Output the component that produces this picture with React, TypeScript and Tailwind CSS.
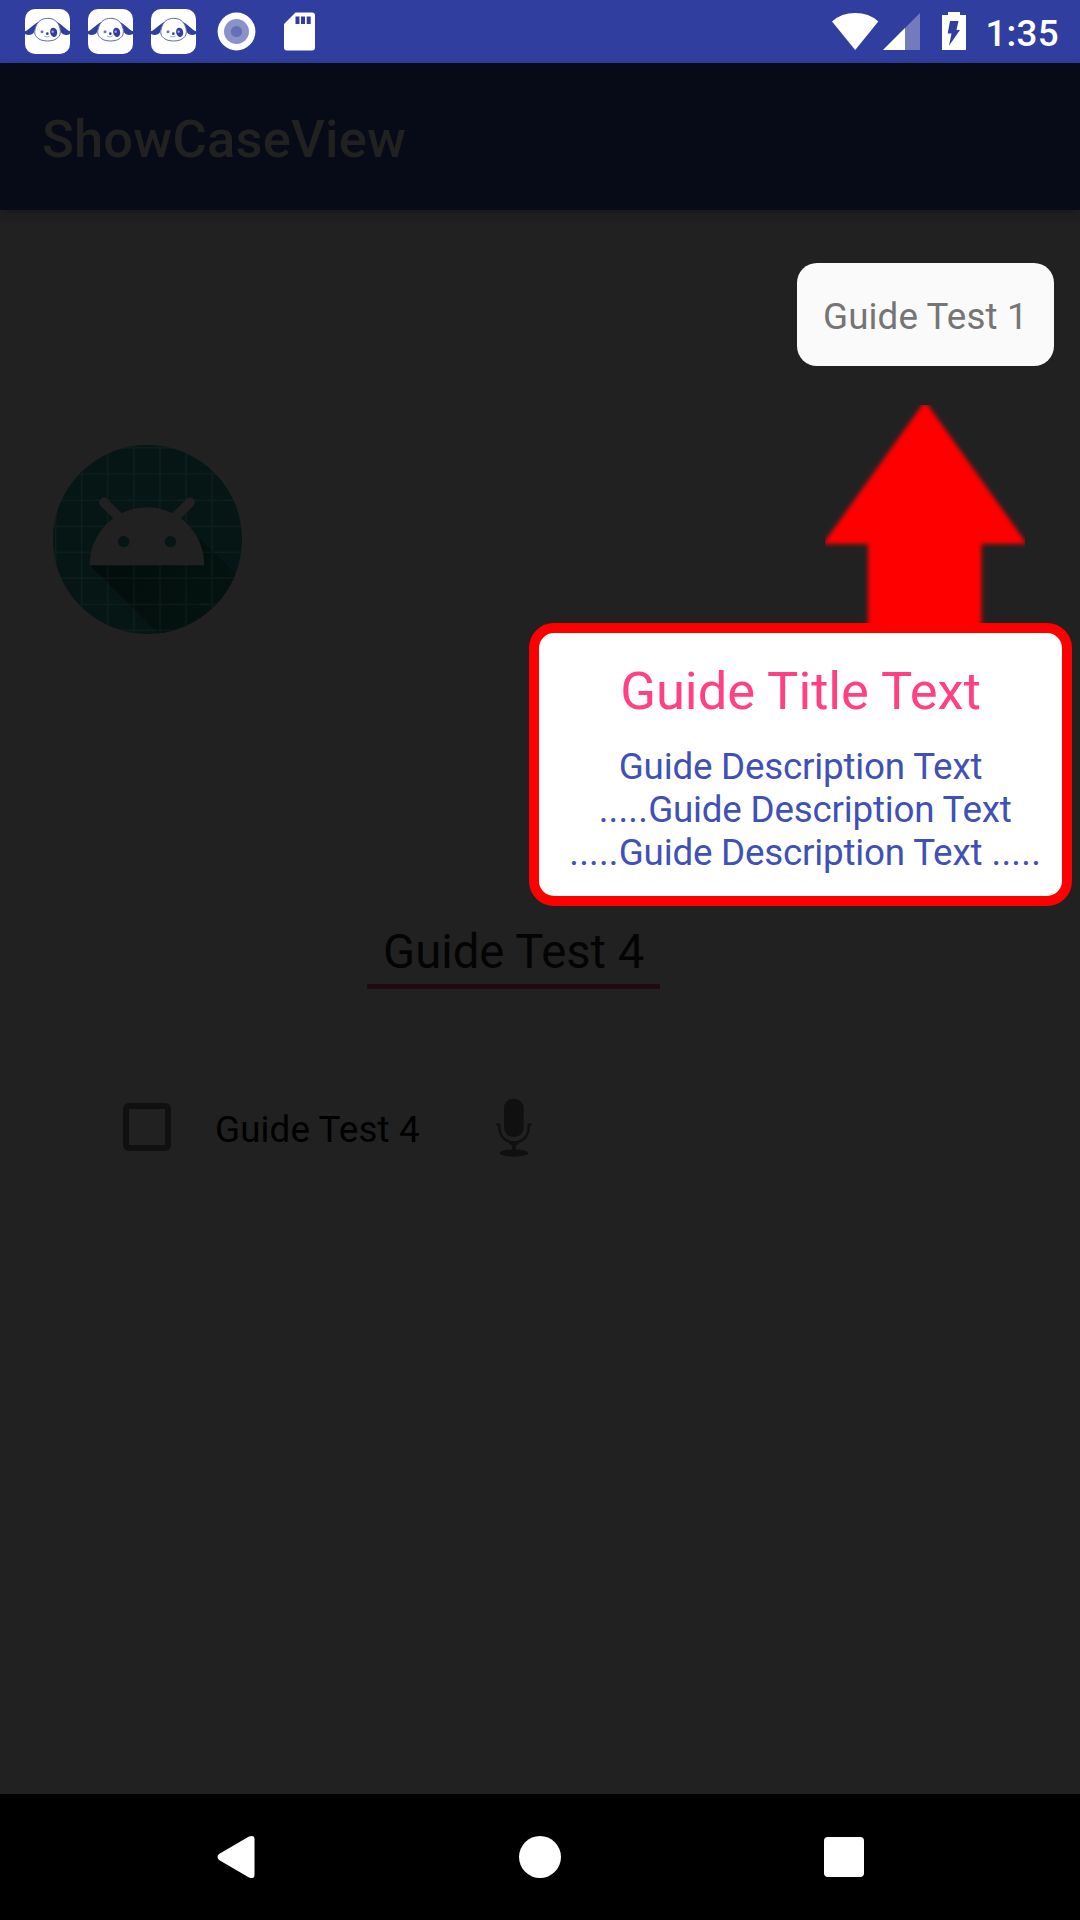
const STATUS_APPS = ['a', 'b', 'c'];

const GUIDE_LINES = [
  { lead: '', text: 'Guide Description Text', trail: '' },
  { lead: ' .....', text: 'Guide Description Text', trail: '' },
  { lead: ' .....', text: 'Guide Description Text', trail: ' .....' },
];

function PuppyIcon() {
  return (
    <svg className="size-[45px] shrink-0" viewBox="0 0 135 135">
      <rect width="135" height="135" rx="30" fill="#fff" />
      <path d="M46 37 C28 42 14 62 0 67 V75 C10 81 22 78 27 70 C30 60 36 48 46 37Z" fill="#303f9f" />
      <path d="M90 37 C108 42 121 62 135 67 V75 C125 81 113 78 108 70 C105 60 99 48 90 37Z" fill="#303f9f" />
      <path
        d="M68 28 C87 28 98 38 103 52 C107 62 108 74 102 82 C95 92 82 96 68 96 C53 96 40 92 33 82 C27 74 29 62 33 52 C38 38 49 28 68 28Z"
        fill="#fff"
        stroke="#5c68b4"
        strokeWidth="3"
      />
      <ellipse cx="86" cy="70" rx="10.500" ry="14" transform="rotate(-12 86 70)" fill="#303f9f" />
      <circle cx="51" cy="68" r="4.500" fill="#6a75bb" />
      <circle cx="83" cy="68" r="3.500" fill="#a9b0da" />
      <circle cx="67" cy="74" r="4" fill="#303f9f" />
      <path d="M58 82 Q66 86 74 81" fill="none" stroke="#8f97cb" strokeWidth="2.500" />
    </svg>
  );
}

function StatusBar() {
  return (
    <header className="flex h-[63px] shrink-0 items-start bg-[#303f9f] pl-[25px] pr-[21px]">
      <div className="flex gap-[18px] pt-[9px]">
        {STATUS_APPS.map((id) => (
          <PuppyIcon key={id} />
        ))}
      </div>
      <svg className="ml-[21px] mt-[12px] size-[39px]" viewBox="0 0 39 39">
        <circle cx="19.5" cy="19.5" r="18.9" fill="#fff" />
        <circle cx="19.5" cy="19.5" r="12.5" fill="#8b92c9" />
        <circle cx="19.5" cy="19.5" r="5.6" fill="#656fb5" />
      </svg>
      <svg className="ml-[28px] mt-[12px] h-[39px] w-[31px]" viewBox="0 0 31 39">
        <path
          fillRule="evenodd"
          d="M11.5.5H28a3 3 0 0 1 3 3V35.500a3 3 0 0 1-3 3H3a3 3 0 0 1-3-3V12Z M11.500 4.500v7.500h4V4.500Z M17 4.500v7.500h4V4.500Z M22.700 4.500v7.500h4V4.500Z"
          fill="#fff"
        />
      </svg>
      <svg className="ml-auto mt-[12px] h-[39px] w-[48px]" viewBox="0 0 48 39">
        <path d="M1 9.400 Q10.500 1 24.200 1 Q38 1 47.300 9.400 L24.200 38Z" fill="#fff" />
      </svg>
      <svg className="ml-[4px] mt-[12px] h-[39px] w-[37px]" viewBox="0 0 37 39">
        <path d="M37 1V38H0Z" fill="#737bbc" />
        <path d="M22 16V38H0Z" fill="#fff" />
      </svg>
      <svg className="ml-[22px] mt-[12px] h-[39px] w-[24px]" viewBox="0 0 24 39">
        <path
          fillRule="evenodd"
          d="M6 0H18V3H24V38H0V3H6Z M8 9H16.500L14.500 18H18L7 33.700L9.500 21.500H5.700Z"
          fill="#fff"
        />
      </svg>
      <span className="ml-[19px] mt-[12px] text-[36.750px] font-medium leading-[43px] tracking-[0.3px] text-white">1:35</span>
    </header>
  );
}

function LauncherIcon() {
  return (
    <svg className="size-[189px]" viewBox="39 44 567 567">
      <defs>
        <clipPath id="disc">
          <circle cx="322.5" cy="327.5" r="283.5" />
        </clipPath>
        <linearGradient id="shade" x1="150" y1="380" x2="450" y2="611" gradientUnits="userSpaceOnUse">
          <stop offset="0" stopColor="#020c0b" />
          <stop offset="1" stopColor="#041310" />
        </linearGradient>
      </defs>
      <g clipPath="url(#disc)">
        <rect x="39" y="44" width="567" height="567" fill="#051614" />
        <path d="M150 405L360 615H606V450L480 325 450 405Z" fill="url(#shade)" />
        <path
          d="M47 44V611M125 44V611M203.500 44V611M282 44V611M360 44V611M438 44V611M516.500 44V611M39 52.500H606M39 131H606M39 210H606M39 288H606M39 366H606M39 443.500H606M39 522H606M39 600H606"
          stroke="#fff"
          strokeOpacity=".035"
          strokeWidth="5"
        />
      </g>
      <path d="M192 216L240 264M450 216L402 264" stroke="#212121" strokeWidth="29" strokeLinecap="round" />
      <path
        fillRule="evenodd"
        d="M149 405C149 308 226 231 321 231C416 231 493 308 493 405Z M251 317a17 17 0 1 0 .1 0Z M391 317a17 17 0 1 0 .1 0Z"
        fill="#212121"
      />
    </svg>
  );
}

function MicIcon() {
  return (
    <svg className="h-[60px] w-[36px]" viewBox="0 0 108 180">
      <rect x="24" y="2" width="59" height="115" rx="28" fill="#101010" />
      <path d="M1 80H10V88C10 116 30 133 54 133C78 133 98 116 98 88V80H107" fill="none" stroke="#101010" strokeWidth="7" />
      <path d="M39 130H69V137L60 143V158H48V143L39 137Z" fill="#101010" />
      <ellipse cx="54" cy="165" rx="43" ry="11" fill="#101010" />
    </svg>
  );
}

function Arrow() {
  return (
    <svg className="ml-[296px] mt-[24px] block h-[218px] w-[200px] overflow-hidden" viewBox="0 0 200 218">
      <defs>
        <filter id="soft" x="-10%" y="-10%" width="120%" height="120%">
          <feGaussianBlur stdDeviation="2" />
        </filter>
      </defs>
      <path d="M100 -4L202 139H156.500V240H43V139H-2Z" fill="#f00" filter="url(#soft)" />
    </svg>
  );
}

function GuideOverlay() {
  return (
    <section className="absolute right-[8px] top-[263px] flex w-[543px] flex-col">
      <div className="mr-[18px] h-[103px] w-[257px] self-end rounded-[20px] bg-[#fafafa] pl-[26px] pt-[32px] text-[36.750px] leading-[43px] tracking-[0.12px] whitespace-nowrap text-[#757575]">
        Guide Test 1
      </div>
      <div className="h-[15px]" />
      <Arrow />
      <div className="h-[283px] rounded-[25px] border-[10px] border-[#f00] bg-white text-center">
        <h2 className="mt-[27px] text-[52.500px] leading-[62px] text-[#ff4081]">Guide Title Text</h2>
        <div className="mt-[23px] text-[36.750px] leading-[43px] whitespace-pre text-[#3f51b5]">
          {GUIDE_LINES.map(({ lead, text, trail }) => (
            <p key={lead + trail}>
              <span className="tracking-[0.2px]">{lead}</span>
              <span className="tracking-[-0.2px]">{text}</span>
              <span className="tracking-[0.2px]">{trail}</span>
            </p>
          ))}
        </div>
      </div>
    </section>
  );
}

function NavigationBar() {
  return (
    <nav className="flex h-[126px] shrink-0 items-center justify-between bg-black pl-[217px] pr-[216px]">
      <svg className="h-[44px] w-[38px]" viewBox="0 0 38 44">
        <path d="M2 19L32 1.500Q37.500-.500 37.500 4V40Q37.500 44.500 32 42.500L2 25Q-1 22 2 19Z" fill="#fff" />
      </svg>
      <div className="ml-[1px] size-[42px] rounded-full bg-white" />
      <div className="size-[40px] rounded-[4px] bg-white" />
    </nav>
  );
}

export default function App() {
  return (
    <div className="relative flex h-[1920px] w-[1080px] flex-col overflow-hidden bg-[#212121] font-['Roboto',sans-serif]">
      <StatusBar />
      <div className="z-10 h-[147px] shrink-0 bg-[#070b17] pl-[42px] pt-[45px] text-[52.500px] font-medium leading-[62px] tracking-[0.2px] text-[#212121] shadow-[0_4px_10px_rgba(0,0,0,0.25)]">
        ShowCaseView
      </div>
      <main className="flex flex-1 flex-col items-start">
        <div className="ml-[53px] mt-[235px]">
          <LauncherIcon />
        </div>
        <div className="ml-[367px] mt-[290px] h-[65px] w-[293px] border-b-[5px] border-[#220911] pl-[16px] pt-px text-[47.250px] leading-[55px] whitespace-nowrap text-[#040404]">
          Guide Test 4
        </div>
        <div className="ml-[123px] mt-[109px] flex h-[60px] items-start">
          <div className="mt-[5px] size-[48px] rounded-[6px] border-[6px] border-[#101010]" />
          <span className="ml-[44px] mt-[10px] w-[205px] text-[36.750px] leading-[43px] tracking-[0.12px] whitespace-nowrap text-black">
            Guide Test 4
          </span>
          <div className="ml-[76px]">
            <MicIcon />
          </div>
        </div>
      </main>
      <GuideOverlay />
      <NavigationBar />
    </div>
  );
}
